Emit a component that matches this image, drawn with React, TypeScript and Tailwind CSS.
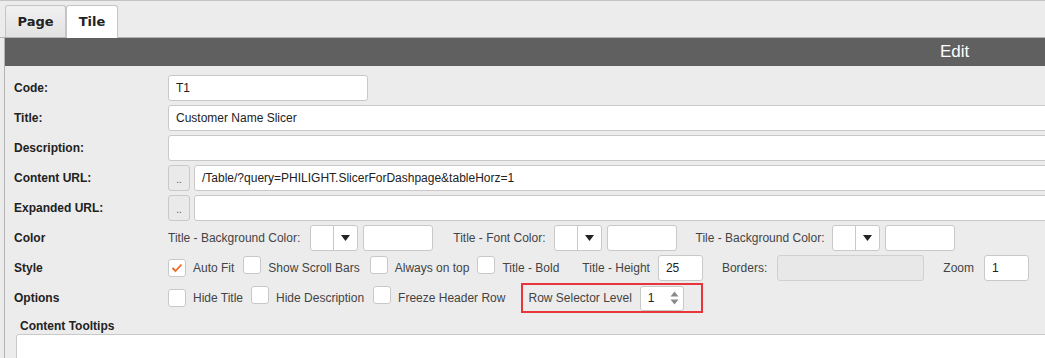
import React from "react";

const font = { fontFamily: '"Liberation Sans", Arial, sans-serif' };

function Check({ checked = false }: { checked?: boolean }) {
  return (
    <span className="inline-flex h-[18px] w-[18px] shrink-0 items-center justify-center rounded-[3px] border border-[#c9c9c9] bg-white">
      {checked ? (
        <svg width="12" height="10" viewBox="0 0 12 10">
          <path d="M1.5 5 L4.5 8 L10.5 1.5" fill="none" stroke="#f26522" strokeWidth="1.8" />
        </svg>
      ) : null}
    </span>
  );
}

function TextBox({ value = "", className = "" }: { value?: string; className?: string }) {
  return (
    <div
      className={`flex h-[26px] shrink-0 items-center rounded-[3px] border border-[#c9c9c9] bg-white px-[7px] text-[12px] text-[#222] ${className}`}
    >
      {value}
    </div>
  );
}

function DotsButton() {
  return (
    <div className="flex h-[26px] w-[22px] shrink-0 items-end justify-center rounded-[3px] border border-[#c9c9c9] bg-[#eaeaea] pb-[5px] text-[10px] leading-none text-[#555]">
      ..
    </div>
  );
}

function ColorPicker() {
  return (
    <div className="flex h-[26px] w-[48px] shrink-0 rounded-[3px] border border-[#c9c9c9] bg-white">
      <div className="w-[23px] border-r border-[#c9c9c9]" />
      <div className="flex flex-1 items-center justify-center">
        <svg width="9" height="6" viewBox="0 0 9 6">
          <path d="M0 0 H9 L4.5 6 Z" fill="#222" />
        </svg>
      </div>
    </div>
  );
}

function Row({ label, bold = true, children }: { label: string; bold?: boolean; children?: React.ReactNode }) {
  return (
    <div className="flex h-[30px] items-center">
      <div className={`w-[154px] shrink-0 text-[12px] text-[#222] ${bold ? "font-bold" : ""}`}>{label}</div>
      <div className="flex items-center">{children}</div>
    </div>
  );
}

export default function App() {
  return (
    <div className="h-[358px] w-[1045px] overflow-hidden bg-[#ececec]" style={font}>
      <div className="border-t border-[#c3c3c3]">
        <div className="flex h-[37px] items-end border-b border-[#b3b3b3] pl-[5px]">
          <div
            className="flex h-[32px] w-[61px] items-center justify-center rounded-t-[3px] border border-b-0 border-[#c5c5c5] bg-gradient-to-b from-[#f1f1f1] to-[#e2e2e2] text-[13px] font-bold text-[#222]"
            style={{ fontFamily: '"DejaVu Sans", Verdana, sans-serif' }}
          >
            Page
          </div>
          <div
            className="-mb-px flex h-[33px] w-[52px] items-center justify-center rounded-t-[3px] border border-b-0 border-[#c5c5c5] bg-white text-[13px] font-bold text-[#222]"
            style={{ fontFamily: '"DejaVu Sans", Verdana, sans-serif' }}
          >
            Tile
          </div>
        </div>
        <div className="ml-[4px] w-[1200px] border-l border-[#b3b3b3]">
          <div className="flex h-[28px] items-center bg-[#606060] pl-[935px] text-[17px] text-white">Edit</div>
          <div className="pl-[9px] pt-[7px]">
            <Row label="Code:">
              <TextBox value="T1" className="w-[200px]" />
            </Row>
            <Row label="Title:">
              <TextBox value="Customer Name Slicer" className="w-[950px]" />
            </Row>
            <Row label="Description:">
              <TextBox className="w-[950px]" />
            </Row>
            <Row label="Content URL:">
              <DotsButton />
              <TextBox value="/Table/?query=PHILIGHT.SlicerForDashpage&tableHorz=1" className="ml-[4px] w-[924px]" />
            </Row>
            <Row label="Expanded URL:">
              <DotsButton />
              <TextBox className="ml-[4px] w-[924px]" />
            </Row>
            <Row label="Color">
              <span className="text-[12px] text-[#444]">Title - Background Color:</span>
              <span className="ml-[10px]"><ColorPicker /></span>
              <TextBox className="ml-[5px] w-[70px]" />
              <span className="ml-[20px] text-[12px] text-[#444]">Title - Font Color:</span>
              <span className="ml-[8px]"><ColorPicker /></span>
              <TextBox className="ml-[5px] w-[70px]" />
              <span className="ml-[19px] text-[12px] text-[#444]">Tile - Background Color:</span>
              <span className="ml-[8px]"><ColorPicker /></span>
              <TextBox className="ml-[5px] w-[70px]" />
            </Row>
            <Row label="Style">
              <Check checked />
              <span className="ml-[7px] text-[12px] text-[#444]">Auto Fit</span>
              <span className="ml-[9px]"><Check /></span>
              <span className="ml-[7px] text-[12px] text-[#444]">Show Scroll Bars</span>
              <span className="ml-[10px]"><Check /></span>
              <span className="ml-[7px] text-[12px] text-[#444]">Always on top</span>
              <span className="ml-[8px]"><Check /></span>
              <span className="ml-[7px] text-[12px] text-[#444]">Title - Bold</span>
              <span className="ml-[23px] text-[12px] text-[#444]">Title - Height</span>
              <TextBox value="25" className="ml-[8px] w-[45px]" />
              <span className="ml-[19px] text-[12px] text-[#444]">Borders:</span>
              <div className="ml-[10px] h-[26px] w-[147px] rounded-[3px] border border-[#d0d0d0] bg-[#e8e8e8]" />
              <span className="ml-[19px] text-[12px] text-[#444]">Zoom</span>
              <TextBox value="1" className="ml-[10px] w-[45px]" />
            </Row>
            <Row label="Options">
              <Check />
              <span className="ml-[7px] text-[12px] text-[#444]">Hide Title</span>
              <span className="ml-[8px]"><Check /></span>
              <span className="ml-[7px] text-[12px] text-[#444]">Hide Description</span>
              <span className="ml-[9px]"><Check /></span>
              <span className="ml-[7px] text-[12px] text-[#444]">Freeze Header Row</span>
              <div className="ml-[16px] flex h-[30px] w-[182px] items-center border-2 border-[#e8353b] pl-[5px]">
                <span className="text-[12px] text-[#444]">Row Selector Level</span>
                <div className="ml-[8px] flex h-[25px] w-[44px] items-center justify-between rounded-[3px] border border-[#c9c9c9] bg-white pl-[7px] pr-[4px] text-[12px] text-[#222]">
                  <span>1</span>
                  <svg width="9" height="16" viewBox="0 0 9 16">
                    <path d="M0.5 6.5 L4.5 1.5 L8.5 6.5 Z" fill="#8a8a8a" />
                    <path d="M0.5 9.5 L4.5 14.5 L8.5 9.5 Z" fill="#8a8a8a" />
                  </svg>
                </div>
              </div>
            </Row>
            <div className="pl-[6px] pt-[5px] text-[12px] font-bold leading-[16px] text-[#222]">Content Tooltips</div>
            <div className="ml-[2px] h-[60px] w-[1100px] rounded-[3px] border border-[#c9c9c9] bg-white" />
          </div>
        </div>
      </div>
    </div>
  );
}
